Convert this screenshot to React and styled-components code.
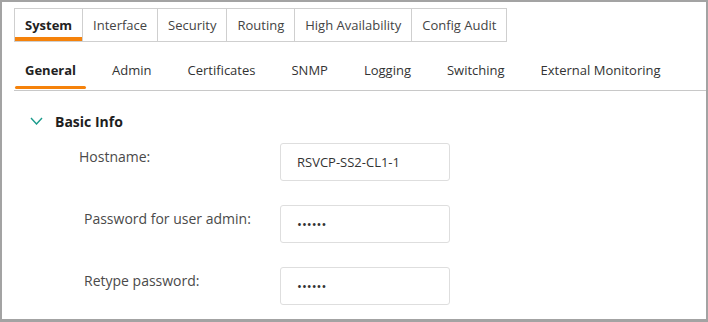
import React from 'react';
import styled, { createGlobalStyle } from 'styled-components';

const GlobalStyle = createGlobalStyle`
  body {
    margin: 0;
    font-family: "Open Sans", "Liberation Sans", sans-serif;
    background: #fff;
  }
  * {
    box-sizing: border-box;
  }
`;

const Frame = styled.div`
  width: 708px;
  height: 322px;
  border: 2px solid #a3a3a3;
  border-bottom-width: 3px;
  background: #fff;
  overflow: hidden;
`;

const TopTabs = styled.div`
  display: flex;
  margin: 6px 0 0 12px;
`;

const TopTab = styled.div`
  height: 34px;
  padding: 0 10px;
  display: flex;
  align-items: center;
  font-size: 13px;
  color: ${(p) => (p.active ? '#222' : '#444')};
  font-weight: ${(p) => (p.active ? 700 : 400)};
  border: 1px solid #cfcfcf;
  margin-left: -1px;
  box-shadow: ${(p) => (p.active ? 'inset 0 -4px 0 #f5820b' : 'none')};
  &:first-child {
    margin-left: 0;
  }
`;

const SubTabs = styled.div`
  display: flex;
  gap: 14px;
  margin-left: 12px;
  border-bottom: 1px solid #c8c8c8;
`;

const SubTab = styled.div`
  position: relative;
  height: 48px;
  padding: 18px 11px 0;
  font-size: 13px;
  line-height: 20px;
  color: ${(p) => (p.active ? '#222' : '#333')};
  font-weight: ${(p) => (p.active ? 700 : 400)};
  &::after {
    content: '';
    display: ${(p) => (p.active ? 'block' : 'none')};
    position: absolute;
    left: 1px;
    right: 1px;
    bottom: 1px;
    height: 3px;
    border-radius: 2px;
    background: #f5820b;
  }
`;

const Section = styled.div`
  padding: 20px 0 0 28px;
`;

const SectionHeader = styled.div`
  display: flex;
  align-items: center;
  gap: 12px;
  height: 20px;
  font-size: 14px;
  font-weight: 700;
  color: #1e1e1e;
`;

const Form = styled.div`
  display: flex;
  flex-direction: column;
  gap: 24px;
  margin: 12px 0 0 -28px;
`;

const Row = styled.div`
  display: grid;
  grid-template-columns: 278px 170px;
  align-items: start;
`;

const Label = styled.label`
  padding: 5px 0 0 ${(p) => p.indent}px;
  font-size: 14px;
  line-height: 18px;
  color: #4a4a4a;
`;

const Input = styled.input`
  width: 170px;
  height: 38px;
  border: 1px solid #dedede;
  border-radius: 3px;
  padding: 0 16px;
  font-family: inherit;
  font-size: 13px;
  color: #333;
  outline: none;
  background: #fff;
`;

const Chevron = () => (
  <svg width="13" height="8" viewBox="0 0 13 8">
    <path d="M1 1l5.5 6L12 1" fill="none" stroke="#1a9b8c" strokeWidth="1.4" />
  </svg>
);

const topTabs = ['System', 'Interface', 'Security', 'Routing', 'High Availability', 'Config Audit'];
const subTabs = ['General', 'Admin', 'Certificates', 'SNMP', 'Logging', 'Switching', 'External Monitoring'];

export default function App() {
  return (
    <Frame>
      <GlobalStyle />
      <TopTabs>
        {topTabs.map((t, i) => (
          <TopTab key={t} active={i === 0}>
            {t}
          </TopTab>
        ))}
      </TopTabs>
      <SubTabs>
        {subTabs.map((t, i) => (
          <SubTab key={t} active={i === 0}>
            {t}
          </SubTab>
        ))}
      </SubTabs>
      <Section>
        <SectionHeader>
          <Chevron />
          Basic Info
        </SectionHeader>
        <Form>
          <Row>
            <Label indent={77}>Hostname:</Label>
            <Input type="text" defaultValue="RSVCP-SS2-CL1-1" readOnly />
          </Row>
          <Row>
            <Label indent={82}>Password for user admin:</Label>
            <Input type="password" defaultValue="secret" readOnly />
          </Row>
          <Row>
            <Label indent={82}>Retype password:</Label>
            <Input type="password" defaultValue="secret" readOnly />
          </Row>
        </Form>
      </Section>
    </Frame>
  );
}
